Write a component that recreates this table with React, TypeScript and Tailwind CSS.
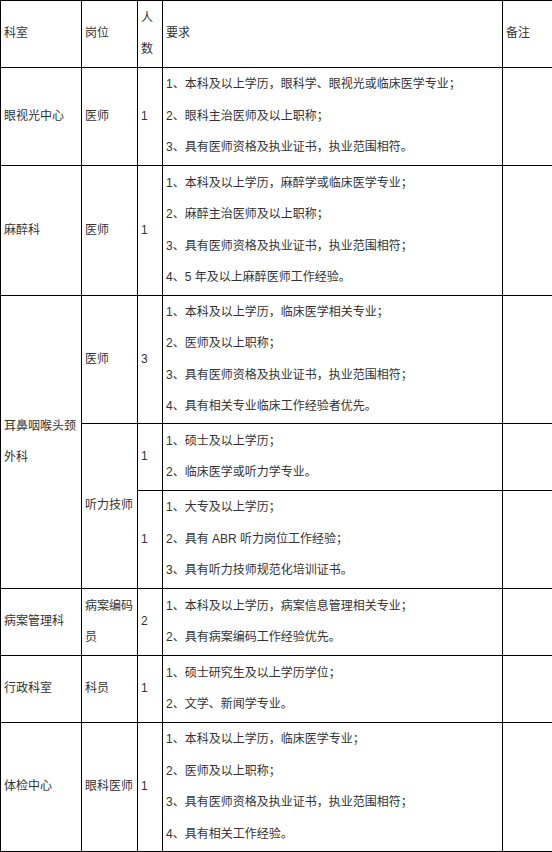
export default function App() {
  const td = "border border-black align-middle pl-[3px] pr-[2px] py-0";
  const req = (items: string[]) => (
    <div>
      {items.map((t, i) => (
        <div key={i}>{t}</div>
      ))}
    </div>
  );

  return (
    <div className="w-[552px] bg-white text-[12px] leading-[31.5px] text-[#333] [font-family:'Liberation_Sans','Noto_Sans_CJK_SC',sans-serif]">
      <table className="w-[552px] table-fixed border-collapse">
        <colgroup>
          <col className="w-[81px]" />
          <col className="w-[56px]" />
          <col className="w-[25px]" />
          <col className="w-[340px]" />
          <col className="w-[50px]" />
        </colgroup>
        <tbody>
          <tr className="h-[67px]">
            <td className={td}>科室</td>
            <td className={td}>岗位</td>
            <td className={td}>人数</td>
            <td className={td}>要求</td>
            <td className={td}>备注</td>
          </tr>
          <tr className="h-[98px]">
            <td className={td}>眼视光中心</td>
            <td className={td}>医师</td>
            <td className={td}>1</td>
            <td className={td}>
              {req([
                "1、本科及以上学历，眼科学、眼视光或临床医学专业；",
                "2、眼科主治医师及以上职称；",
                "3、具有医师资格及执业证书，执业范围相符。",
              ])}
            </td>
            <td className={td}></td>
          </tr>
          <tr className="h-[130px]">
            <td className={td}>麻醉科</td>
            <td className={td}>医师</td>
            <td className={td}>1</td>
            <td className={td}>
              {req([
                "1、本科及以上学历，麻醉学或临床医学专业；",
                "2、麻醉主治医师及以上职称；",
                "3、具有医师资格及执业证书，执业范围相符；",
                "4、5 年及以上麻醉医师工作经验。",
              ])}
            </td>
            <td className={td}></td>
          </tr>
          <tr className="h-[128px]">
            <td className={td} rowSpan={3}>耳鼻咽喉头颈外科</td>
            <td className={td}>医师</td>
            <td className={td}>3</td>
            <td className={td}>
              {req([
                "1、本科及以上学历，临床医学相关专业；",
                "2、医师及以上职称；",
                "3、具有医师资格及执业证书，执业范围相符；",
                "4、具有相关专业临床工作经验者优先。",
              ])}
            </td>
            <td className={td}></td>
          </tr>
          <tr className="h-[67px]">
            <td className={td} rowSpan={2}>听力技师</td>
            <td className={td}>1</td>
            <td className={td}>
              {req(["1、硕士及以上学历；", "2、临床医学或听力学专业。"])}
            </td>
            <td className={td}></td>
          </tr>
          <tr className="h-[98px]">
            <td className={td}>1</td>
            <td className={td}>
              {req([
                "1、大专及以上学历；",
                "2、具有 ABR 听力岗位工作经验；",
                "3、具有听力技师规范化培训证书。",
              ])}
            </td>
            <td className={td}></td>
          </tr>
          <tr className="h-[67px]">
            <td className={td}>病案管理科</td>
            <td className={td}>病案编码员</td>
            <td className={td}>2</td>
            <td className={td}>
              {req([
                "1、本科及以上学历，病案信息管理相关专业；",
                "2、具有病案编码工作经验优先。",
              ])}
            </td>
            <td className={td}></td>
          </tr>
          <tr className="h-[67px]">
            <td className={td}>行政科室</td>
            <td className={td}>科员</td>
            <td className={td}>1</td>
            <td className={td}>
              {req(["1、硕士研究生及以上学历学位；", "2、文学、新闻学专业。"])}
            </td>
            <td className={td}></td>
          </tr>
          <tr className="h-[129px]">
            <td className={td}>体检中心</td>
            <td className={td}>眼科医师</td>
            <td className={td}>1</td>
            <td className={td}>
              {req([
                "1、本科及以上学历，临床医学专业；",
                "2、医师及以上职称；",
                "3、具有医师资格及执业证书，执业范围相符；",
                "4、具有相关工作经验。",
              ])}
            </td>
            <td className={td}></td>
          </tr>
        </tbody>
      </table>
    </div>
  );
}
